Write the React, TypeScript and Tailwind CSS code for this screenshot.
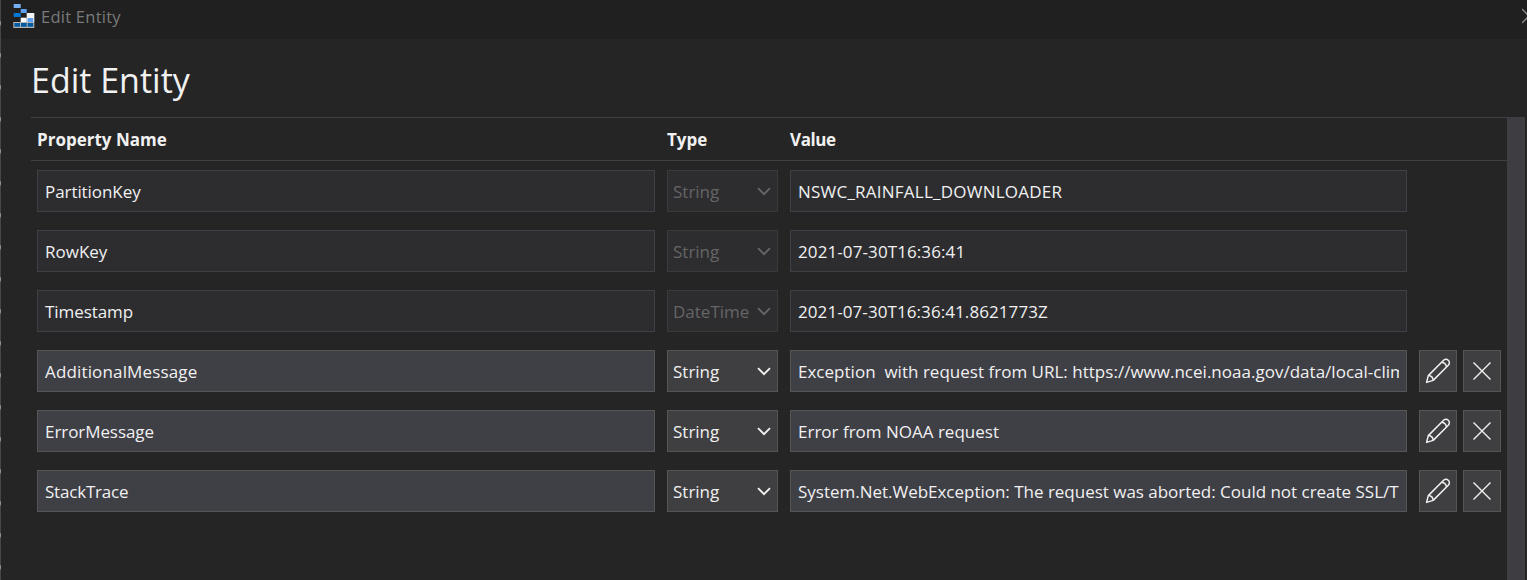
interface EntityRow {
  name: string;
  type: string;
  value: string;
  locked: boolean;
  nameClass: string;
  valueClass: string;
}

const rows: EntityRow[] = [
  { name: "PartitionKey", type: "String", value: "NSWC_RAINFALL_DOWNLOADER", locked: true, nameClass: "tracking-[-0.07px]", valueClass: "tracking-[0.23px]" },
  { name: "RowKey", type: "String", value: "2021-07-30T16:36:41", locked: true, nameClass: "", valueClass: "tracking-[0.1px]" },
  { name: "Timestamp", type: "DateTime", value: "2021-07-30T16:36:41.8621773Z", locked: true, nameClass: "tracking-[-0.07px]", valueClass: "tracking-[0.08px]" },
  { name: "AdditionalMessage", type: "String", value: "Exception  with request from URL: https://www.ncei.noaa.gov/data/local-clim", locked: false, nameClass: "tracking-[0.15px]", valueClass: "tracking-[0.015px]" },
  { name: "ErrorMessage", type: "String", value: "Error from NOAA request", locked: false, nameClass: "tracking-[-0.07px]", valueClass: "" },
  { name: "StackTrace", type: "String", value: "System.Net.WebException: The request was aborted: Could not create SSL/T", locked: false, nameClass: "tracking-[-0.2px]", valueClass: "tracking-[-0.015px]" },
];

function AppLogo() {
  return (
    <svg width="22" height="24" viewBox="0 0 22 24">
      <rect x="0.7" y="0" width="7" height="4" fill="#76b0f3" />
      <rect x="7.7" y="5" width="6" height="4" fill="#5ea0ef" />
      <rect x="0.7" y="9" width="7" height="4" fill="#0078d4" />
      <rect x="13.7" y="9" width="7.6" height="9" fill="#f4f4f4" />
      <rect x="7.7" y="13.7" width="6" height="4.3" fill="#fff" />
      <rect x="14.5" y="14" width="5.7" height="4" fill="#5ea0ef" />
      <rect x="0.3" y="18" width="21" height="6" fill="#b5b5b5" />
      <rect x="1.3" y="19" width="5.7" height="3.8" fill="#005ba1" />
      <rect x="8" y="19" width="5.7" height="3.8" fill="#005ba1" />
      <rect x="14.7" y="19" width="5.5" height="3.8" fill="#005ba1" />
    </svg>
  );
}

function Chevron() {
  return (
    <svg width="14" height="9" viewBox="0 0 14 9" fill="none" stroke="currentColor" strokeWidth="1.9">
      <path d="M1 1.2L7 7.2L13 1.2" />
    </svg>
  );
}

function Pencil() {
  return (
    <svg width="26" height="26" viewBox="0 0 26 26" fill="none" stroke="#f0f0f0" strokeWidth="1.5" strokeLinejoin="round">
      <path d="M1.6 24.4L3.3 17.6L18.6 2.3C20 1 22 1 23.3 2.3C24.7 3.6 24.7 5.8 23.3 7.2L8.2 22.4Z" />
      <path d="M3.3 17.6C6 17.8 8 19.8 8.2 22.4M16.8 4.2C19.3 4.6 21.1 6.4 21.5 9" />
    </svg>
  );
}

function Cross() {
  return (
    <svg width="18" height="18" viewBox="0 0 18 18" fill="none" stroke="#f0f0f0" strokeWidth="1.4">
      <path d="M0.5 0.5L17.5 17.5M17.5 0.5L0.5 17.5" />
    </svg>
  );
}

function PropertyRow(props: { row: EntityRow }) {
  const { row } = props;
  const field = row.locked ? "border-[#3f3f46] bg-[#2d2d30]" : "border-[#555555] bg-[#3f3f46]";
  const select = row.locked
    ? "border-[#3a3a3d] bg-[#2d2d30] text-[#656565]"
    : "border-[#555555] bg-[#3f3f41] text-[#f0f0f0]";
  const button = "flex h-[42px] w-[38px] items-center justify-center border border-[#555555] bg-[#3f3f41]";
  return (
    <div className="flex h-[42px]">
      <div className={`flex w-[618px] items-center border pt-0.5 pl-[7px] ${field}`}>
        <span className={row.nameClass}>{row.name}</span>
      </div>
      <div className={`ml-3 flex w-[111px] items-center justify-between border pr-1.5 pl-[5px] ${select}`}>
        <span className="pt-0.5">{row.type}</span>
        <Chevron />
      </div>
      <div className={`ml-3 flex w-[617px] items-center border px-[7px] pt-0.5 ${field}`}>
        <div className="w-full overflow-hidden whitespace-pre">
          <span className={row.valueClass}>{row.value}</span>
        </div>
      </div>
      {!row.locked && (
        <div className="ml-3 flex gap-1.5">
          <button className={button}><Pencil /></button>
          <button className={button}><Cross /></button>
        </div>
      )}
    </div>
  );
}

export default function App() {
  return (
    <div className="flex h-[580px] w-[1527px] overflow-hidden bg-[#252525] font-['Open_Sans','Noto_Sans',sans-serif] text-[17px] leading-6 text-[#f1f1f1]">
      <div className="w-px shrink-0 bg-[repeating-linear-gradient(to_bottom,#464646_0px,#464646_21px,#a0a0a0_22px,#808080_25px,#464646_26px,#464646_32px)]" />
      <div className="flex w-[1526px] flex-col">
        <div className="flex h-[39px] shrink-0 items-start bg-[#202020] pl-3">
          <div className="pt-1"><AppLogo /></div>
          <span className="ml-1.5 pt-[5px] text-[16.5px] tracking-[0.25px] text-[#7a7a7a]">Edit Entity</span>
          <svg className="mt-2 ml-auto" width="5" height="16" viewBox="0 0 5 16" fill="none" stroke="#8a8a8a" strokeWidth="1.4">
            <path d="M0 1L14 15M0 15L14 1" />
          </svg>
        </div>
        <h1 className="h-[78px] shrink-0 pt-[17px] pl-[30px] text-[34px] leading-[48px]">Edit Entity</h1>
        <div className="flex min-h-0 flex-1">
          <div className="ml-[30px] w-[1476px] border-t border-[#3f3f46]">
            <div className="flex h-[43px] items-center border-b border-[#3f3f46] pt-0.5 pl-1.5 font-bold">
              <span className="w-[630px]">Property Name</span>
              <span className="w-[123px]">Type</span>
              <span className="tracking-[-0.4px]">Value</span>
            </div>
            <div className="flex flex-col gap-[18px] pt-[9px] pl-1.5">
              {rows.map((row) => (
                <PropertyRow key={row.name} row={row} />
              ))}
            </div>
          </div>
          <div className="w-[18px] bg-[#3e3e42]" />
        </div>
      </div>
    </div>
  );
}
